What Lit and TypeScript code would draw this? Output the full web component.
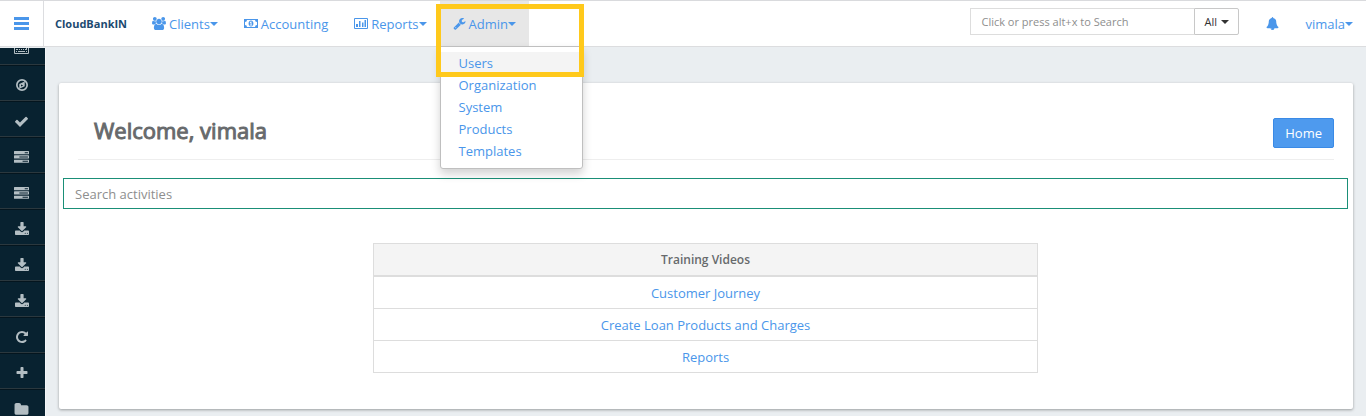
import { LitElement, html, css, svg } from "lit";
import { customElement, property, state } from "lit/decorators.js";

type Glyph = { w: number; h: number; box: string; art: unknown };

const fa = (w: number, h: number, d: string, box = "0 0 1792 1792"): Glyph => ({ w, h, box, art: svg`<path d=${d}></path>` });

const GLYPHS: Record<string, Glyph> = {
  bars: { w: 15, h: 13, box: "0 0 15 13", art: svg`<path d="M0 0h15v3H0zM0 5h15v3H0zM0 10h15v3H0z"></path>` },
  group: fa(14, 13, "M593 896q-162 5-265 128h-134q-82 0-138-40.5t-56-118.5q0-353 124-353 6 0 43.5 21t97.5 42.5 119 21.5q67 0 133-23-5 37-5 66 0 139 81 256zm1071 637q0 120-73 189.5t-194 69.5h-874q-121 0-194-69.5t-73-189.5q0-53 3.5-103.5t14-109 26.5-108.5 43-97.5 62-81 85.5-53.5 111.5-20q10 0 43 21.5t73 48 107 48 135 21.5 135-21.5 107-48 73-48 43-21.5q61 0 111.5 20t85.5 53.5 62 81 43 97.5 26.5 108.5 14 109 3.5 103.5zm-1024-1277q0 106-75 181t-181 75-181-75-75-181 75-181 181-75 181 75 75 181zm704 384q0 159-112.5 271.5t-271.5 112.5-271.5-112.5-112.5-271.5 112.5-271.5 271.5-112.5 271.5 112.5 112.5 271.5zm576 225q0 78-56 118.5t-138 40.5h-134q-103-123-265-128 81-117 81-256 0-29-5-66 66 23 133 23 59 0 119-21.5t97.5-42.5 43.5-21q124 0 124 353zm-128-609q0 106-75 181t-181 75-181-75-75-181 75-181 181-75 181 75 75 181z", "0 0 1920 1792"),
  money: { w: 14, h: 9, box: "0 0 14 9", art: svg`<path fill-rule="evenodd" d="M0 0h14v9H0zM3 1a2 2 0 0 1-2 2v3a2 2 0 0 1 2 2h8a2 2 0 0 1 2-2V3a2 2 0 0 1-2-2z"></path><path fill-rule="evenodd" d="M7 1.5c1.6 0 2.4 1.4 2.4 3s-.8 3-2.4 3-2.4-1.4-2.4-3 .8-3 2.4-3zM6.700 2.600l-1 .9.5.5.4-.3v2h-.8v.7h2.400v-.7h-.7V2.600z"></path>` },
  chart: { w: 14, h: 11, box: "0 0 14 11", art: svg`<path fill-rule="evenodd" d="M1 0h12q1 0 1 1v9q0 1-1 1H1q-1 0-1-1V1q0-1 1-1zM1 1v9h12V1zM2 6h2v3H2zM5 3h1.500v6H5zM8 4.500h1.500V9H8zM10.500 2H12v7h-1.500z"></path>` },
  wrench: fa(13, 13, "M448 1472q0-26-19-45t-45-19-45 19-19 45 19 45 45 19 45-19 19-45zm644-420l-682 682q-37 37-90 37-52 0-91-37l-106-108q-38-36-38-90 0-53 38-91l681-681q39 98 114.5 173.5t173.5 114.5zm634-435q0 39-23 106-47 134-164.5 217.5t-258.5 83.5q-185 0-316.5-131.5t-131.5-316.5 131.5-316.5 316.5-131.5q58 0 121.5 16.5t107.5 46.5q16 11 16 28t-16 28l-293 169v224l193 107q5-3 79-48.5t135.5-81 70.5-35.5q15 0 23.5 10t8.5 25z"),
  bell: fa(13, 13, "M912 1696q0-16-16-16-59 0-101.5-42.5t-42.5-101.5q0-16-16-16t-16 16q0 73 51.5 124.5t124.5 51.5q16 0 16-16zm816-288q0 52-38 90t-90 38h-448q0 106-75 181t-181 75-181-75-75-181h-448q-52 0-90-38t-38-90q50-42 91-88t85-119.5 74.5-158.5 50-206 19.5-260q0-152 117-282.5t307-158.5q-8-19-8-39 0-40 28-68t68-28 68 28 28 68q0 20-8 39 190 28 307 158.5t117 282.5q0 139 19.5 260t50 206 74.5 158.5 85 119.5 91 88z"),
  caret: { w: 8, h: 4, box: "0 0 8 4", art: svg`<path d="M0 0h8L4 4z"></path>` },
  keyboard: { w: 15, h: 9, box: "0 0 15 9", art: svg`<path fill-rule="evenodd" d="M1 0h13q1 0 1 1v7q0 1-1 1H1q-1 0-1-1V1q0-1 1-1zM1 1v7h13V1zM2 2h1v1H2zM4 2h1v1H4zM6 2h1v1H6zM8 2h1v1H8zM10 2h1v1h-1zM12 2h1v3h-2V4h1zM2 4h2v1H2zM5 4h1v1H5zM7 4h1v1H7zM9 4h1v1H9zM2 6h1v1H2zM4 6h7v1H4zM12 6h1v1h-1z"></path>` },
  compass: { w: 12, h: 12, box: "0 0 12 12", art: svg`<path fill-rule="evenodd" d="M6 0a6 6 0 1 1 0 12A6 6 0 0 1 6 0zM6 1.700a4.300 4.300 0 1 0 0 8.600a4.300 4.300 0 0 0 0-8.600zM8.700 2.500v4.700L3.300 9.700V5zM5 5.600v1.900l2.200-1z"></path>` },
  check: fa(15, 15, "M1671 566q0 40-28 68l-724 724-136 136q-28 28-68 28t-68-28l-136-136-362-362q-28-28-28-68t28-68l136-136q28-28 68-28t68 28l294 295 656-657q28-28 68-28t68 28l136 136q28 28 28 68z"),
  tasks: fa(15, 15, "M1024 1408h640v-128h-640v128zm-384-512h1024v-128h-1024v128zm640-512h384v-128h-384v128zm512 832v256q0 26-19 45t-45 19h-1664q-26 0-45-19t-19-45v-256q0-26 19-45t45-19h1664q26 0 45 19t19 45zm0-512v256q0 26-19 45t-45 19h-1664q-26 0-45-19t-19-45v-256q0-26 19-45t45-19h1664q26 0 45 19t19 45zm0-512v256q0 26-19 45t-45 19h-1664q-26 0-45-19t-19-45v-256q0-26 19-45t45-19h1664q26 0 45 19t19 45z"),
  download: fa(14, 14, "M1344 1344q0-26-19-45t-45-19-45 19-19 45 19 45 45 19 45-19 19-45zm256 0q0-26-19-45t-45-19-45 19-19 45 19 45 45 19 45-19 19-45zm128-224v320q0 40-28 68t-68 28h-1472q-40 0-68-28t-28-68v-320q0-40 28-68t68-28h465l135 136q58 56 136 56t136-56l136-136h464q40 0 68 28t28 68zm-325-569q17 41-14 70l-448 448q-18 19-45 19t-45-19l-448-448q-31-29-14-70 17-39 59-39h256v-448q0-26 19-45t45-19h256q26 0 45 19t19 45v448h256q42 0 59 39z", "64 0 1664 1664"),
  repeat: fa(14, 14, "M1664 256v448q0 26-19 45t-45 19h-448q-42 0-59-40-17-39 14-69l138-138q-148-137-349-137-104 0-198.5 40.5t-163.5 109.5-109.5 163.5-40.5 198.5 40.5 198.5 109.5 163.5 163.5 109.5 198.5 40.5q119 0 225-52t179-147q7-10 23-12 15 0 25 9l137 138q9 8 9.5 20.5t-7.5 22.5q-109 132-264 204.5t-327 72.5q-156 0-298-61t-245-164-164-245-61-298 61-298 164-245 245-164 298-61q147 0 284.5 55.5t244.5 156.5l130-129q29-31 70-14 39 17 39 59z"),
  plus: fa(14, 14, "M1600 736v192q0 40-28 68t-68 28h-416v416q0 40-28 68t-68 28h-192q-40 0-68-28t-28-68v-416h-416q-40 0-68-28t-28-68v-192q0-40 28-68t68-28h416v-416q0-40 28-68t68-28h192q40 0 68 28t28 68v416h416q40 0 68 28t28 68z"),
  folder: fa(15, 15, "M1728 608v704q0 92-66 158t-158 66h-1216q-92 0-158-66t-66-158v-960q0-92 66-158t158-66h320q92 0 158 66t66 158v32h672q92 0 158 66t66 158z"),
};

@customElement("ui-icon")
export class UiIcon extends LitElement {
  @property() name = "bars";

  static styles = css`
    :host { display: inline-flex; flex: none; }
    .glyph { display: block; fill: currentColor; }
  `;

  render() {
    const g = GLYPHS[this.name];
    return html`<svg class="glyph" width=${g.w} height=${g.h} viewBox=${g.box} aria-hidden="true">${g.art}</svg>`;
  }
}

@customElement("side-rail")
export class SideRail extends LitElement {
  private items = [
    ["keyboard", "Navigation"], ["compass", "Explore"], ["check", "Checker inbox"], ["tasks", "Collection sheet"],
    ["tasks", "Individual sheet"], ["download", "Client import"], ["download", "Loan import"], ["download", "Savings import"],
    ["repeat", "Repayments"], ["plus", "Create"], ["folder", "Documents"],
  ];

  static styles = css`
    :host { display: block; overflow: hidden; background: #082230; border-right: 1px solid #f4f6f8; }
    .list { list-style: none; margin: -19px 0 0; padding: 0; }
    .item { border-bottom: 1px solid #2b383e; border-top: 1px solid #04151e; }
    .link { display: flex; align-items: center; justify-content: center; box-sizing: border-box; height: 34px; padding: 4px 2px 0 0; color: #b3bec3; }
  `;

  render() {
    return html`<ul class="list">
      ${this.items.map(([icon, label]) => html`<li class="item"><a class="link" href="#" aria-label=${label}><ui-icon name=${icon}></ui-icon></a></li>`)}
    </ul>`;
  }
}

@customElement("top-bar")
export class TopBar extends LitElement {
  @state() private open = true;

  static styles = css`
    :host { display: flex; position: relative; z-index: 2; height: 45px; background: #fff; border-top: 1px solid #d9dadd; border-bottom: 1px solid #dcdddf; color: #4a96ea; }
    button, input, select { font: inherit; }
    button { border: 0; background: none; color: inherit; padding: 0; cursor: pointer; }
    .toggle { width: 44px; display: flex; align-items: center; justify-content: center; border-right: 1px solid #dcdde0; }
    .brand { width: 84px; padding-left: 11px; display: flex; align-items: center; color: #1c4a70; font-size: 11px; font-weight: 700; text-decoration: none; }
    .menu { display: flex; list-style: none; margin: 0; padding: 0; }
    .entry { display: flex; position: relative; }
    .link { display: flex; align-items: center; padding: 0 13px; color: inherit; text-decoration: none; white-space: nowrap; }
    .link.active { background: #e7e7e7; }
    .label { margin-left: 3px; }
    .tools { display: flex; align-items: center; margin-left: auto; }
    .search { display: flex; align-items: stretch; height: 27px; margin: 0 14px 4px 0; font-size: 11px; }
    .query { width: 224px; box-sizing: border-box; border: 1px solid #ddd; border-right: 0; padding: 0 10px; color: #555; outline: 0; }
    .query::placeholder { color: #8e8e8e; opacity: 1; }
    .scope { display: grid; align-items: center; }
    .select { grid-area: 1 / 1; width: 45px; height: 27px; box-sizing: border-box; appearance: none; border: 1px solid #c8c8c8; border-radius: 0 2px 2px 0; background: #fff; color: #333; padding: 0 0 0 9px; }
    .arrow { grid-area: 1 / 1; justify-self: end; margin-right: 10px; color: #333; pointer-events: none; }
    .bell { padding: 0 13px; display: flex; }
    .user { display: flex; align-items: center; padding: 0 13px; }
    .dropdown { position: absolute; top: 100%; left: 0; width: 143px; box-sizing: border-box; list-style: none; margin: 0; padding: 5px 0 6px; background: #fff; border: 1px solid #bfbfbf; border-radius: 0 0 3px 3px; box-shadow: 0 5px 10px rgba(0, 0, 0, .18); }
    .choice { display: block; padding: 0 18px; line-height: 22px; color: inherit; text-decoration: none; }
    .choice.current { background: #f4f4f4; }
    .marker { position: absolute; top: 3px; left: -4px; width: 148px; height: 73px; box-sizing: border-box; border: 5px solid #ffc91b; pointer-events: none; }
  `;

  render() {
    const choices = ["Users", "Organization", "System", "Products", "Templates"];
    return html`
      <button class="toggle" aria-label="Toggle menu"><ui-icon name="bars"></ui-icon></button>
      <a class="brand" href="#">CloudBankIN</a>
      <ul class="menu">
        <li class="entry"><button class="link"><ui-icon name="group"></ui-icon><span class="label">Clients</span><ui-icon name="caret"></ui-icon></button></li>
        <li class="entry"><a class="link" href="#"><ui-icon name="money"></ui-icon><span class="label">Accounting</span></a></li>
        <li class="entry"><button class="link"><ui-icon name="chart"></ui-icon><span class="label">Reports</span><ui-icon name="caret"></ui-icon></button></li>
        <li class="entry">
          <button class="link active" aria-expanded=${this.open} @click=${() => (this.open = !this.open)}><ui-icon name="wrench"></ui-icon><span class="label">Admin</span><ui-icon name="caret"></ui-icon></button>
          ${this.open ? html`<ul class="dropdown">${choices.map((c, i) => html`<li><a class="choice ${i ? "" : "current"}" href="#">${c}</a></li>`)}</ul><div class="marker"></div>` : null}
        </li>
      </ul>
      <div class="tools">
        <form class="search">
          <input class="query" type="text" aria-label="Search" placeholder="Click or press alt+x to Search" />
          <div class="scope"><select class="select" aria-label="Search scope"><option>All</option></select><ui-icon class="arrow" name="caret"></ui-icon></div>
        </form>
        <button class="bell" aria-label="Notifications"><ui-icon name="bell"></ui-icon></button>
        <button class="user">vimala<ui-icon name="caret"></ui-icon></button>
      </div>`;
  }
}

@customElement("app-root")
export class AppRoot extends LitElement {
  private videos = ["Customer Journey", "Create Loan Products and Charges", "Reports"];

  static styles = css`
    :host { display: flex; flex-direction: column; height: 100vh; overflow: hidden; background: #eaeef1; font: 13px/18px "Open Sans", sans-serif; color: #676a6c; }
    .body { flex: 1; min-height: 0; display: grid; grid-template-columns: 46px 1fr; padding-top: 1px; }
    .main { min-width: 0; padding: 35px 13px 0; overflow: hidden; }
    .card { background: #fff; border-radius: 2px; box-shadow: 0 1px 3px rgba(0, 0, 0, .35); padding: 35px 5px 36px 4px; }
    .heading { display: flex; align-items: flex-start; justify-content: space-between; margin: 0 14px 18px 15px; padding: 0 0 11px 16px; border-bottom: 1px solid #eee; }
    .title { margin: 0; font-size: 22px; line-height: 24px; font-weight: 400; -webkit-text-stroke: 1px currentColor; }
    .home { font: inherit; height: 30px; padding: 0 11px; color: #fff; background: #4e9aee; border: 1px solid #3a8ae6; border-radius: 2px; }
    .activities { display: block; width: 100%; height: 31px; box-sizing: border-box; border: 1px solid #1a8f77; padding: 0 11px; font: inherit; color: #555; outline: 0; }
    .activities::placeholder { color: #8e8e8e; opacity: 1; }
    .videos { width: 100%; max-width: 665px; margin: 34px auto 0; border-collapse: collapse; text-align: center; }
    .cell, .head { border: 1px solid #ddd; padding: 7px 8px 6px; }
    .head { background: #f4f4f4; border-bottom-width: 2px; font-weight: 600; font-size: 12px; }
    .link { color: #4a96ea; text-decoration: none; }
  `;

  render() {
    return html`
      <top-bar></top-bar>
      <div class="body">
        <side-rail></side-rail>
        <main class="main">
          <section class="card">
            <header class="heading"><h1 class="title">Welcome, vimala</h1><button class="home">Home</button></header>
            <input class="activities" type="text" aria-label="Search activities" placeholder="Search activities" />
            <table class="videos">
              <thead><tr><th class="head">Training Videos</th></tr></thead>
              <tbody>${this.videos.map((v) => html`<tr><td class="cell"><a class="link" href="#">${v}</a></td></tr>`)}</tbody>
            </table>
          </section>
        </main>
      </div>`;
  }
}
